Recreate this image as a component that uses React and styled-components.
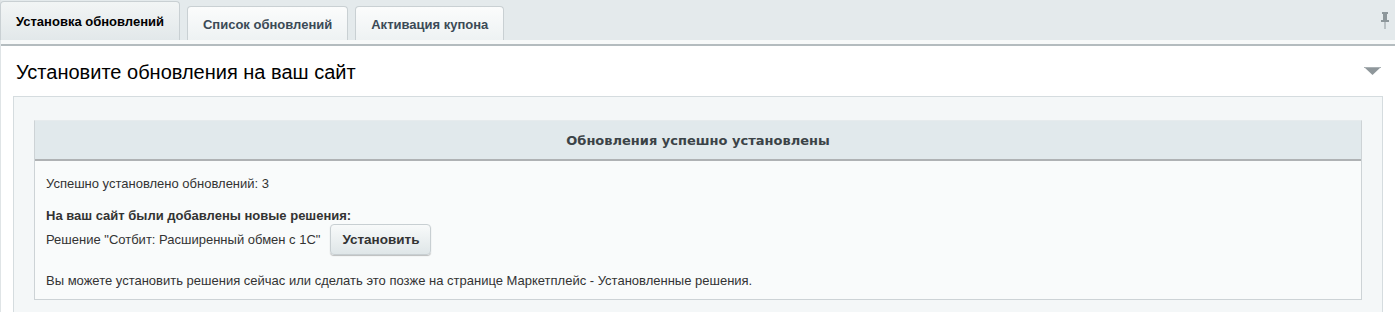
import React from "react";
import styled, { createGlobalStyle } from "styled-components";

const GlobalStyle = createGlobalStyle`
  html, body {
    margin: 0;
    padding: 0;
    background: #ffffff;
  }
  body {
    font-family: "Liberation Sans", Arial, sans-serif;
    font-size: 13px;
    color: #333;
  }
`;

const Page = styled.div`
  width: 1395px;
  box-sizing: border-box;
  border-left: 1px solid #dfe4e6;
`;

const TabBar = styled.div`
  display: flex;
  align-items: flex-end;
  gap: 7px;
  height: 40px;
  position: relative;
  background: #e4eaec;
  border-bottom: 4px solid #f7f9f9;
  box-shadow: 0 2px 0 #b4bcbf;
`;

const Tab = styled.div`
  box-sizing: border-box;
  height: ${({ $active }) => ($active ? "39px" : "34px")};
  padding: 0 15px;
  display: flex;
  align-items: center;
  justify-content: center;
  font-weight: bold;
  font-size: 13px;
  color: ${({ $active }) => ($active ? "#000" : "#3b4a56")};
  background: ${({ $active }) =>
    $active
      ? "linear-gradient(#f2f5f5, #e2e8ea)"
      : "linear-gradient(#fbfcfc, #eef2f3)"};
  border: 1px solid #c9d0d3;
  border-bottom: none;
  border-radius: 4px 4px 0 0;
  padding-top: ${({ $active }) => ($active ? "0" : "2px")};
  margin-left: ${({ $first }) => ($first ? "-1px" : "0")};
`;

const Pin = styled.svg`
  position: absolute;
  right: 6px;
  top: 12px;
`;

const Content = styled.div`
  padding: 2px 0 0 0;
`;

const TitleRow = styled.div`
  display: flex;
  align-items: center;
  justify-content: space-between;
  height: 50px;
  padding: 0 14px 0 15px;
`;

const Title = styled.h1`
  margin: 0;
  font-weight: normal;
  font-size: 20px;
  color: #000;
  padding-top: 2px;
`;

const Section = styled.div`
  margin: 0 12px 0 12px;
  border: 1px solid #d5dcdf;
  border-bottom: none;
  background: #f4f7f8;
  padding: 23px 20px 20px 20px;
`;

const Card = styled.div`
  border: 1px solid #cdd3d6;
  border-top-color: #e6ebed;
  background: #f9fbfb;
`;

const CardHeader = styled.div`
  height: 40px;
  display: flex;
  align-items: center;
  justify-content: center;
  background: #e1e9ec;
  border-bottom: 2px solid #afb2b4;
  font-family: "DejaVu Sans", Verdana, sans-serif;
  font-weight: bold;
  font-size: 13px;
  color: #3b4347;
  padding-top: 1px;
  box-sizing: border-box;
`;

const CardBody = styled.div`
  padding: 15px 11px 10px;
`;

const Line = styled.div`
  line-height: 16px;
  font-weight: ${({ $bold }) => ($bold ? "bold" : "normal")};
  margin-top: ${({ $gap }) => $gap || 0}px;
  color: #333;
`;

const Row = styled.div`
  display: flex;
  align-items: center;
  gap: 10px;
  height: 31px;
`;

const Button = styled.button`
  width: 101px;
  height: 31px;
  border: 1px solid #c8cfd2;
  border-radius: 4px;
  background: linear-gradient(#f8fafa, #dfe6e8);
  box-shadow: 0 1px 1px rgba(0, 0, 0, 0.25);
  font-family: "Liberation Sans", Arial, sans-serif;
  font-weight: bold;
  font-size: 13.5px;
  color: #333;
  padding: 0;
  cursor: pointer;
`;

const Triangle = () => (
  <svg width="17" height="9" viewBox="0 0 17 9">
    <polygon points="0,0 17,0 8.5,8" fill="#8f979b" />
    <rect x="0" y="0" width="17" height="1" fill="#aab1b4" />
  </svg>
);

export default function App() {
  return (
    <>
      <GlobalStyle />
      <Page>
        <TabBar>
          <Tab $active $first>Установка обновлений</Tab>
          <Tab>Список обновлений</Tab>
          <Tab>Активация купона</Tab>
          <Pin width="8" height="17" viewBox="0 0 8 17">
            <rect x="1" y="0" width="6" height="2" fill="#8d979b" />
            <rect x="2" y="2" width="4" height="6" fill="#8d979b" />
            <rect x="0" y="8" width="8" height="2" fill="#8d979b" />
            <rect x="3.5" y="10" width="1" height="7" fill="#8d979b" />
          </Pin>
        </TabBar>
        <Content>
          <TitleRow>
            <Title>Установите обновления на ваш сайт</Title>
            <Triangle />
          </TitleRow>
          <Section>
            <Card>
              <CardHeader>Обновления успешно установлены</CardHeader>
              <CardBody>
                <Line>Успешно установлено обновлений: 3</Line>
                <Line $bold $gap={16}>
                  На ваш сайт были добавлены новые решения:
                </Line>
                <Row>
                  <span>Решение "Сотбит: Расширенный обмен с 1С"</span>
                  <Button>Установить</Button>
                </Row>
                <Line $gap={18}>
                  Вы можете установить решения сейчас или сделать это позже на
                  странице Маркетплейс - Установленные решения.
                </Line>
              </CardBody>
            </Card>
          </Section>
        </Content>
      </Page>
    </>
  );
}
